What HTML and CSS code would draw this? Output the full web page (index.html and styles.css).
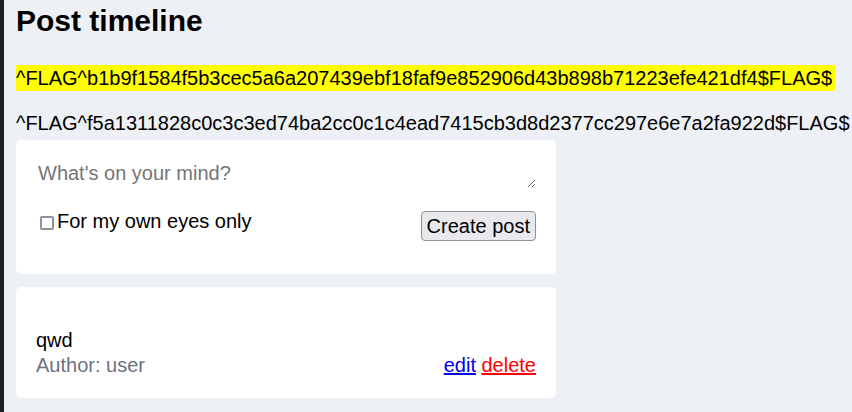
FILE: index.html
```html
<!DOCTYPE html>
<html lang="en">
<head>
<meta charset="utf-8">
<title>Post timeline</title>
<link rel="stylesheet" href="styles.css">
</head>
<body>
<main class="page">
  <h1 class="title">Post timeline</h1>
  <p class="flag flag-first"><span class="highlight">^FLAG^b1b9f1584f5b3cec5a6a207439ebf18faf9e852906d43b898b71223efe421df4$FLAG$</span></p>
  <p class="flag flag-second">^FLAG^f5a1311828c0c3c3ed74ba2cc0c1c4ead7415cb3d8d2377cc297e6e7a2fa922d$FLAG$</p>
  <form class="card composer">
    <textarea class="composer-input" rows="1" placeholder="What's on your mind?"></textarea>
    <div class="composer-row">
      <label class="private"><input type="checkbox" class="check">For my own eyes only</label>
      <button type="button" class="btn">Create post</button>
    </div>
  </form>
  <article class="card post">
    <div class="post-body">qwd</div>
    <div class="post-meta">
      <span class="author">Author: user</span>
      <span class="actions"><a href="#" class="link-edit">edit</a> <a href="#" class="link-delete">delete</a></span>
    </div>
  </article>
</main>
</body>
</html>
```
FILE: styles.css
```css
html, body {
  margin: 0;
  padding: 0;
}
body {
  background: #edf0f4;
  font-family: "Liberation Sans", Arial, sans-serif;
  font-size: 20px;
  line-height: 23px;
  color: #000;
  min-height: 412px;
  border-left: 4px solid #1c1f25;
  box-sizing: border-box;
}
.page {
  padding: 4px 12px 0;
  display: flex;
  flex-direction: column;
  align-items: flex-start;
}
.title {
  margin: 0;
  font-size: 30px;
  line-height: 34px;
  font-weight: bold;
}
.flag {
  margin: 0;
  white-space: nowrap;
}
.flag-first {
  margin-top: 29px;
}
.highlight {
  background: #ffff00;
  padding: 2px 3px 2px 0;
}
.flag-second {
  margin-top: 22px;
}
.card {
  background: #fff;
  border-radius: 5px;
  width: 540px;
  box-sizing: border-box;
}
.composer {
  margin: 5px 0 0;
  padding: 20px 20px 33px;
}
.composer-input {
  display: block;
  width: 100%;
  box-sizing: border-box;
  border: none;
  outline: none;
  padding: 2px;
  font: inherit;
  line-height: 23px;
  height: 28px;
  resize: vertical;
  background: #fff;
  color: #000;
}
.composer-input::placeholder {
  color: #757575;
}
.composer-row {
  margin-top: 22px;
  display: flex;
  justify-content: space-between;
  align-items: flex-start;
}
.private {
  display: flex;
  align-items: center;
}
.check {
  appearance: none;
  -webkit-appearance: none;
  width: 14px;
  height: 14px;
  margin: 2px 3px 0 4px;
  border: 2px solid #8f8f9d;
  border-radius: 2px;
  background: #fff;
  box-sizing: border-box;
}
.btn {
  margin-top: 1px;
  font: inherit;
  line-height: 24px;
  padding: 2px 5px;
  background: #e9e9ed;
  border: 1px solid #8f8f9d;
  border-radius: 4px;
  color: #000;
}
.post {
  margin-top: 13px;
  padding: 42px 20px 21px;
}
.post-meta {
  margin-top: 2px;
  display: flex;
  justify-content: space-between;
}
.author {
  color: #6b7280;
}
.link-edit {
  color: #0000ee;
}
.link-delete {
  color: #ff0000;
}
```
